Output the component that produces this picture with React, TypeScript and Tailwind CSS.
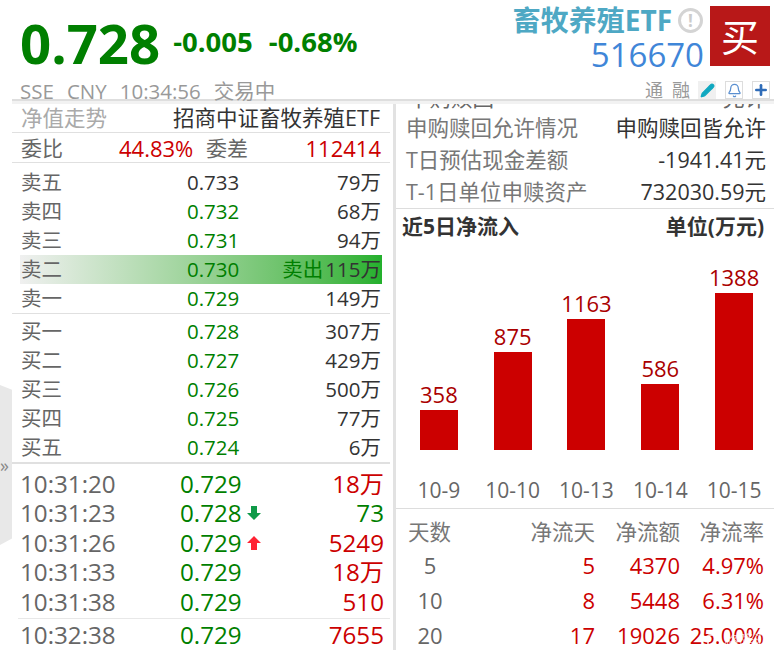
import { Bell, Pencil, Plus } from "lucide-react";

const sells = [
  { name: "卖五", price: "0.733", vol: "79万", color: "text-[#333333]" },
  { name: "卖四", price: "0.732", vol: "68万", color: "text-[#007f00]" },
  { name: "卖三", price: "0.731", vol: "94万", color: "text-[#007f00]" },
  { name: "卖二", price: "0.730", vol: "115万", color: "text-[#007f00]", active: true },
  { name: "卖一", price: "0.729", vol: "149万", color: "text-[#007f00]" },
];

const buys = [
  { name: "买一", price: "0.728", vol: "307万" },
  { name: "买二", price: "0.727", vol: "429万" },
  { name: "买三", price: "0.726", vol: "500万" },
  { name: "买四", price: "0.725", vol: "77万" },
  { name: "买五", price: "0.724", vol: "6万" },
];

const trades = [
  { time: "10:31:20", price: "0.729", vol: "18万", color: "text-[#cc0000]" },
  { time: "10:31:23", price: "0.728", vol: "73", color: "text-[#007f00]", arrow: "down" },
  { time: "10:31:26", price: "0.729", vol: "5249", color: "text-[#cc0000]", arrow: "up" },
  { time: "10:31:33", price: "0.729", vol: "18万", color: "text-[#cc0000]" },
  { time: "10:31:38", price: "0.729", vol: "510", color: "text-[#cc0000]" },
];

const infoRows = [
  { label: "申购赎回允许情况", value: "申购赎回皆允许" },
  { label: "T日预估现金差额", value: "-1941.41元" },
  { label: "T-1日单位申赎资产", value: "732030.59元" },
];

const bars = [
  { value: "358", date: "10-9", height: "h-[40px]" },
  { value: "875", date: "10-10", height: "h-[98px]" },
  { value: "1163", date: "10-13", height: "h-[131px]" },
  { value: "586", date: "10-14", height: "h-[66px]" },
  { value: "1388", date: "10-15", height: "h-[157px]" },
];

const flows = [
  { days: "5", count: "5", amount: "4370", rate: "4.97%" },
  { days: "10", count: "8", amount: "5448", rate: "6.31%" },
  { days: "20", count: "17", amount: "19026", rate: "25.00%" },
];

const App = () => {
  return (
    <div className="relative w-[774px] h-[650px] overflow-hidden bg-white font-['Open_Sans','Noto_Sans_CJK_SC',sans-serif] text-[#333333]">
      {/* Header */}
      <div className="flex h-[99px] justify-between">
        <div className="pl-[20px]">
          <div className="flex h-[80px] items-center gap-[13px] pt-[6px] font-bold text-[#007f00]">
            <span className="text-[54.5px] leading-none">0.728</span>
            <span className="-mt-[3px] flex gap-[16px] text-[27.5px] leading-none">
              <span>-0.005</span>
              <span>-0.68%</span>
            </span>
          </div>
          <div className="flex gap-[13px] text-[20.5px] leading-[22px] text-[#999999]">
            <span>SSE</span>
            <span>CNY</span>
            <span>10:34:56</span>
            <span>交易中</span>
          </div>
        </div>
        <div className="flex flex-col items-end pr-[4px] pt-[6px]">
          <div className="flex h-[60px]">
            <div className="flex flex-col items-end pr-[6px]">
              <div className="flex h-[29px] items-center gap-[6px]">
                <span className="text-[28px] leading-[29px] font-bold text-[#4ea8c4]">畜牧养殖ETF</span>
                <span className="mr-[1px] flex h-[25px] w-[25px] items-center justify-center rounded-full border-[3px] border-[#d4d4d4] text-[17px] font-bold text-[#cccccc]">!</span>
              </div>
              <span className="mt-[1px] text-[33px] leading-[38px] text-[#3f86d8]">516670</span>
            </div>
            <div className="flex h-[60px] w-[60px] items-center justify-center bg-[#b81818] text-[38px] leading-none text-white">买</div>
          </div>
          <div className="mt-[15px] flex items-center">
            <span className="mr-[8px] flex gap-[9px] text-[18px] leading-[18px] text-[#999999]">
              <span>通</span>
              <span>融</span>
            </span>
            <span className="flex h-[18px] w-[18px] items-center justify-center bg-[#f0f0f0]">
              <Pencil size={15} className="text-[#10a8c0]" fill="#10a8c0" />
            </span>
            <span className="ml-[9px] flex h-[18px] w-[18px] items-center justify-center border border-[#dddddd]">
              <Bell size={15} className="text-[#5a8fd0]" />
            </span>
            <span className="ml-[9px] flex h-[18px] w-[18px] items-center justify-center border border-[#dddddd]">
              <Plus size={16} strokeWidth={4} className="text-[#2f6cb8]" />
            </span>
          </div>
        </div>
      </div>
      <div className="ml-[12px] h-[5px] border-t-2 border-[#dedede] bg-[#f2f2f2]" />

      <div className="flex">
        {/* Left column */}
        <div className="ml-[12px] w-[378px]">
          <div className="flex h-[29px] items-center justify-between border-b border-[#e0e0e0] pl-[9px] pr-[10px] text-[21.5px] leading-none">
            <span className="text-[#aaaaaa]">净值走势</span>
            <span>招商中证畜牧养殖ETF</span>
          </div>
          <div className="flex h-[30px] items-center border-b border-[#e0e0e0] pl-[9px] pr-[9px] pt-[1px] text-[21px] leading-none">
            <span className="w-[98px] text-[#666666]">委比</span>
            <span className="w-[74px] whitespace-nowrap text-right text-[22px] text-[#cc0000]">44.83%</span>
            <span className="ml-[13px] text-[#666666]">委差</span>
            <span className="flex-1 text-right text-[22px] text-[#cc0000]">112414</span>
          </div>

          <div className="flex flex-col border-b border-[#e0e0e0] pt-[5px]">
            {sells.map((row) => (
              <div
                key={row.name}
                className={`grid h-[29px] grid-cols-[166px_70px_1fr] items-center whitespace-nowrap text-[20.5px] leading-none ${row.active ? "mx-[8px] bg-gradient-to-r from-[#f0f0f0] to-[#22b02c] pl-[1px] pr-[1px]" : "pl-[9px] pr-[9px]"}`}
              >
                <span className="text-[#666666]">{row.name}</span>
                <span className={row.color}>{row.price}</span>
                <span className="text-right">
                  {row.active && <span className="mr-[2px] text-[#007f00]">卖出</span>}
                  {row.vol}
                </span>
              </div>
            ))}
          </div>

          <div className="flex flex-col border-b-2 border-[#e0e0e0] pt-[3px]">
            {buys.map((row) => (
              <div key={row.name} className="grid h-[29px] grid-cols-[166px_70px_1fr] items-center pl-[9px] pr-[9px] text-[20.5px] leading-none">
                <span className="text-[#666666]">{row.name}</span>
                <span className="text-[#007f00]">{row.price}</span>
                <span className="text-right">{row.vol}</span>
              </div>
            ))}
          </div>

          <div className="flex flex-col pl-[6px] pt-[5px] text-[24.2px] leading-none">
            {trades.map((row) => (
              <div key={row.time} className="grid h-[29.6px] grid-cols-[160px_70px_1fr] items-center pl-[2px] pr-[6px]">
                <span className="text-[#666666]">{row.time}</span>
                <span className="relative text-[#007f00]">
                  {row.price}
                  {row.arrow === "down" && (
                    <svg viewBox="0 0 14 14" className="absolute left-[67px] top-[5px] h-[14px] w-[14px] fill-[#0f9a48]">
                      <path d="M4 0h6v7h4l-7 7-7-7h4z" />
                    </svg>
                  )}
                  {row.arrow === "up" && (
                    <svg viewBox="0 0 14 14" className="absolute left-[67px] top-[5px] h-[14px] w-[14px] fill-[#ff2233]">
                      <path d="M4 14h6V7h4L7 0 0 7h4z" />
                    </svg>
                  )}
                </span>
                <span className={`text-right ${row.color}`}>{row.vol}</span>
              </div>
            ))}
            <div className="mt-[1px] grid h-[33px] grid-cols-[160px_70px_1fr] items-center border-t border-[#e8e8e8] pl-[2px] pr-[6px]">
              <span className="text-[#666666]">10:32:38</span>
              <span className="text-[#007f00]">0.729</span>
              <span className="text-right text-[#cc0000]">7655</span>
            </div>
          </div>
        </div>

        {/* Right column */}
        <div className="ml-[3px] h-[546px] w-[381px] border-l-[3px] border-[#e2e2e2]">
          <div className="flex h-[5px] justify-between overflow-hidden pl-[12px] pr-[8px] text-[21.5px] leading-[5px] text-[#666666]">
            <span className="-mt-[9px] block">申购赎回</span>
            <span className="-mt-[9px] block">允许</span>
          </div>
          <div className="flex flex-col border-b border-[#dddddd] pt-[3px]">
            {infoRows.map((row) => (
              <div key={row.label} className="flex h-[32px] items-center justify-between whitespace-nowrap pl-[10px] pr-[8px] text-[21.5px] leading-none">
                <span className="text-[#777777]">{row.label}</span>
                <span>{row.value}</span>
              </div>
            ))}
          </div>
          <div className="flex h-[35px] items-center justify-between pl-[6px] pr-[10px] text-[21px] font-bold leading-none">
            <span>近5日净流入</span>
            <span>单位(万元)</span>
          </div>

          <div className="flex h-[206px] items-end pl-[6px] pr-[3px]">
            {bars.map((bar) => (
              <div key={bar.date} className="flex w-[74px] flex-col items-center">
                <span className="mb-[3px] text-[22px] leading-[26px] text-[#aa0000]">{bar.value}</span>
                <div className={`w-[38px] bg-[#cc0000] ${bar.height}`} />
              </div>
            ))}
          </div>
          <div className="flex h-[59px] items-end border-b border-[#dddddd] pb-[4px] pl-[6px] pr-[3px]">
            {bars.map((bar) => (
              <span key={bar.date} className="w-[74px] text-center text-[21px] leading-[28px] text-[#666666]">
                {bar.date}
              </span>
            ))}
          </div>

          <div className="grid grid-cols-[44px_143px_85px_1fr] items-center pl-[12px] pr-[10px] pt-[8px] text-[21.5px] leading-none">
            <span className="flex h-[30px] items-center whitespace-nowrap text-[#777777]">天数</span>
            <span className="flex h-[30px] items-center justify-end text-[#777777]">净流天</span>
            <span className="flex h-[30px] items-center justify-end text-[#777777]">净流额</span>
            <span className="flex h-[30px] items-center justify-end text-[#777777]">净流率</span>
            {flows.map((row) => (
              <div key={row.days} className="col-span-4 grid h-[35px] grid-cols-[44px_143px_85px_1fr] items-center text-[22px] text-[#cc0000]">
                <span className="text-center text-[#666666]">{row.days}</span>
                <span className="text-right">{row.count}</span>
                <span className="text-right">{row.amount}</span>
                <span className="text-right">{row.rate}</span>
              </div>
            ))}
          </div>
        </div>
      </div>

      {/* Side tab + watermark */}
      <div className="absolute left-0 top-[385px] flex h-[160px] w-[12px] items-center bg-[#e8e8e8] [clip-path:polygon(0_0,100%_3%,100%_96%,0_100%)]">
        <span className="text-[18px] leading-none text-[#888888]">»</span>
      </div>
      <div className="absolute bottom-[2px] right-[5px] flex items-center gap-[3px] text-[15px] leading-none text-white/70">
        <span className="h-[14px] w-[14px] rounded-[3px] border-2 border-white/70" />
        <span>格隆汇</span>
      </div>
    </div>
  );
};

export default App;
